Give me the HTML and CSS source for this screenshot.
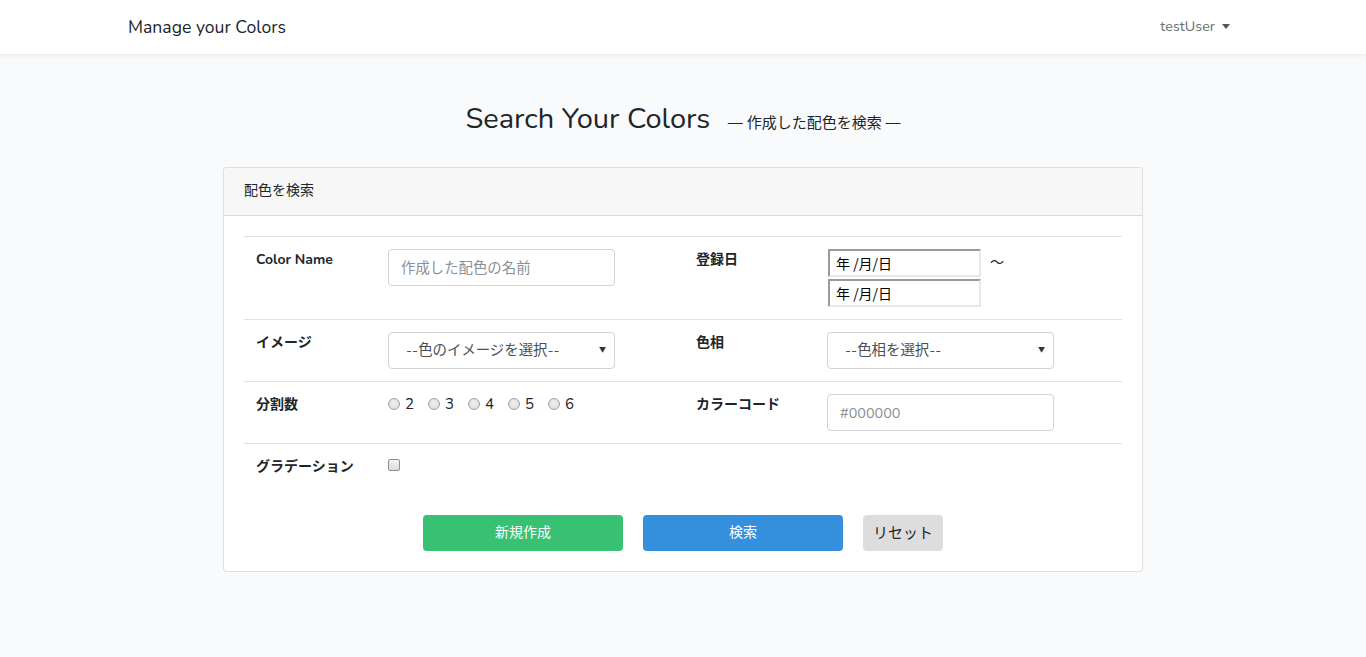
FILE: index.html
```html
<!DOCTYPE html>
<html lang="ja">
<head>
<meta charset="utf-8">
<title>Manage your Colors</title>
<link rel="stylesheet" href="styles.css">
</head>
<body>
<nav class="navbar">
  <div class="container nav-inner">
    <a class="brand">Manage your Colors</a>
    <a class="user">testUser <span class="caret"></span></a>
  </div>
</nav>
<main class="container">
  <h1 class="title">Search Your Colors <small>— 作成した配色を検索 —</small></h1>
  <div class="card">
    <div class="card-header">配色を検索</div>
    <div class="card-body">
      <div class="tbl">
        <div class="row row-first">
          <div class="cell label">Color Name</div>
          <div class="cell"><input class="form-control" type="text" placeholder="作成した配色の名前"></div>
          <div class="cell label">登録日</div>
          <div class="cell date-cell">
            <div class="dates">
              <input class="date" type="text" value="年 /月/日">
              <input class="date" type="text" value="年 /月/日">
            </div>
            <span class="tilde">～</span>
          </div>
        </div>
        <div class="row">
          <div class="cell label">イメージ</div>
          <div class="cell"><div class="select"><span>--色のイメージを選択--</span><i class="arrow">▼</i></div></div>
          <div class="cell label">色相</div>
          <div class="cell"><div class="select"><span>--色相を選択--</span><i class="arrow">▼</i></div></div>
        </div>
        <div class="row">
          <div class="cell label">分割数</div>
          <div class="cell radios">
            <label class="radio"><span class="dot"></span>2</label>
            <label class="radio"><span class="dot"></span>3</label>
            <label class="radio"><span class="dot"></span>4</label>
            <label class="radio"><span class="dot"></span>5</label>
            <label class="radio"><span class="dot"></span>6</label>
          </div>
          <div class="cell label">カラーコード</div>
          <div class="cell"><input class="form-control" type="text" placeholder="#000000"></div>
        </div>
        <div class="row row-last">
          <div class="cell label">グラデーション</div>
          <div class="cell"><span class="check"></span></div>
        </div>
      </div>
      <div class="buttons">
        <button class="btn btn-green">新規作成</button>
        <button class="btn btn-blue">検索</button>
        <button class="btn btn-gray">リセット</button>
      </div>
    </div>
  </div>
</main>
</body>
</html>
```

FILE: styles.css
```css
* { box-sizing: border-box; }
html, body { margin: 0; padding: 0; }
body {
  background: #f8fafc;
  font-family: "Nunito", Lato, "Noto Sans CJK JP", sans-serif;
  font-size: 14.4px;
  line-height: 1.6;
  color: #212529;
}
.container {
  width: 1140px;
  margin: 0 auto;
  padding: 0 15px;
}
.navbar {
  background: #fff;
  height: 55px;
  box-shadow: 0 2px 4px rgba(0,0,0,.04);
  border-bottom: 1px solid #eceef0;
}
.nav-inner {
  display: flex;
  align-items: center;
  justify-content: space-between;
  height: 54px;
}
.brand {
  font-size: 17.6px;
  color: #212529;
  margin-top: 1px;
}
.user {
  color: #6c6f73;
  font-size: 14.4px;
  padding-right: 8px;
  display: flex;
  align-items: center;
  margin-top: -1px;
}
.caret {
  display: inline-block;
  margin-left: 7px;
  border-top: 5px solid #555;
  border-left: 4.5px solid transparent;
  border-right: 4.5px solid transparent;
}
.title {
  text-align: center;
  font-weight: 400;
  font-size: 29px;
  line-height: 34px;
  margin: 47px 0 27px;
  color: #212529;
}
.title small {
  font-size: 15px;
  margin-left: 10px;
  color: #212529;
}
.card {
  width: 920px;
  margin: 0 auto;
  background: #fff;
  border: 1px solid rgba(0,0,0,.125);
  border-radius: 4px;
}
.card-header {
  background: #f7f7f7;
  padding: 12px 20px 13px;
  border-bottom: 1px solid rgba(0,0,0,.125);
  border-radius: 4px 4px 0 0;
  font-size: 14px;
}
.card-body {
  padding: 20px;
}
.row {
  display: grid;
  grid-template-columns: 132px 308px 131px 1fr;
  border-top: 1px solid #dee2e6;
}
.cell {
  padding: 12px;
}
.label {
  font-weight: 700;
  font-size: 14px;
}
.form-control {
  display: block;
  width: 227px;
  height: 37px;
  padding: 6px 12px;
  font: inherit;
  font-size: 14.4px;
  color: #495057;
  background: #fff;
  border: 1px solid #ced4da;
  border-radius: 4px;
}
.form-control::placeholder { color: #8a9096; }
.date-cell {
  display: flex;
  align-items: flex-start;
}
.dates {
  display: flex;
  flex-direction: column;
  gap: 2px;
  margin-left: 1px;
}
.date {
  width: 153px;
  height: 28px;
  padding: 1px 6px;
  font-family: "Noto Sans CJK JP", sans-serif;
  font-size: 14px;
  color: #000;
  border-style: solid;
  border-width: 2px;
  border-color: #9a9a9a #e8e8e8 #e8e8e8 #9a9a9a;
  background: #fff;
}
.tilde {
  margin-left: 9px;
  font-size: 14px;
  line-height: 28px;
}
.select {
  position: relative;
  width: 227px;
  height: 37px;
  border: 1px solid #ced4da;
  border-radius: 4px;
  padding: 6px 12px 6px 17px;
  color: #495057;
  font-size: 14.4px;
  line-height: 23px;
  background: #fff;
}
.arrow {
  position: absolute;
  right: 8px;
  top: 12px;
  font-style: normal;
  font-size: 7px;
  line-height: 10px;
  color: #333;
}
.radios {
  display: flex;
  align-items: flex-start;
  padding-top: 10px;
}
.radio {
  display: flex;
  align-items: center;
  margin-right: 14px;
  font-size: 15px;
  color: #212529;
}
.dot {
  width: 12px;
  height: 12px;
  border-radius: 50%;
  border: 1px solid #a3a3a3;
  background: radial-gradient(circle at 50% 40%, #f0f0f0, #d6d6d6);
  margin-right: 5px;
}
.check {
  display: block;
  width: 12px;
  height: 12px;
  margin-top: 3px;
  border: 1px solid #8f8f8f;
  border-radius: 2px;
  background: linear-gradient(#f2f2f2, #dcdcdc);
}
.buttons {
  display: flex;
  justify-content: center;
  gap: 20px;
  margin-top: 24px;
}
.btn {
  height: 36px;
  border: none;
  border-radius: 4px;
  font: inherit;
  font-size: 14px;
  color: #fff;
}
.btn-green { width: 200px; background: #38c172; }
.btn-blue { width: 200px; background: #3490dc; }
.btn-gray { width: 80px; background: #dddddd; color: #212529; font-size: 15px; }
```
